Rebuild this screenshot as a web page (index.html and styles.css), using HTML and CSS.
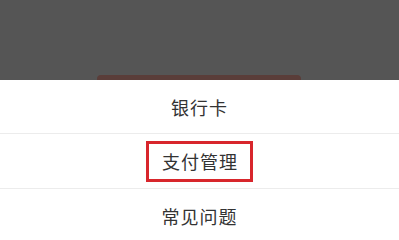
FILE: index.html
```html
<!DOCTYPE html>
<html lang="zh">
<head>
<meta charset="utf-8">
<link rel="stylesheet" href="styles.css">
</head>
<body>
<div class="overlay">
  <div class="peek-button"></div>
</div>
<div class="sheet">
  <div class="row"><span class="label">银行卡</span></div>
  <div class="row"><span class="label highlight">支付管理</span></div>
  <div class="row"><span class="label">常见问题</span></div>
</div>
</body>
</html>
```
FILE: styles.css
```css
html, body {
  margin: 0;
  padding: 0;
  background: #ffffff;
}
body {
  width: 399px;
  height: 238px;
  overflow: hidden;
  font-family: "Noto Sans CJK SC", "Noto Sans", sans-serif;
}
.overlay {
  height: 80px;
  background: #555555;
  display: flex;
  flex-direction: column;
  justify-content: flex-end;
  align-items: center;
}
.peek-button {
  width: 204px;
  height: 5px;
  margin-left: -1px;
  background: #5a3d39;
  border-radius: 4px 4px 0 0;
}
.sheet {
  background: #ffffff;
  display: flex;
  flex-direction: column;
}
.row {
  height: 54px;
  display: flex;
  align-items: center;
  justify-content: center;
  border-bottom: 1px solid #ececec;
}
.row:first-child {
  height: 53px;
}
.label {
  font-size: 18px;
  color: #333333;
  letter-spacing: 1px;
  line-height: 1;
}
.highlight {
  box-sizing: border-box;
  height: 41px;
  display: flex;
  align-items: center;
  padding: 0 12px 0 13px;
  border: 3px solid #d8262c;
}
```
